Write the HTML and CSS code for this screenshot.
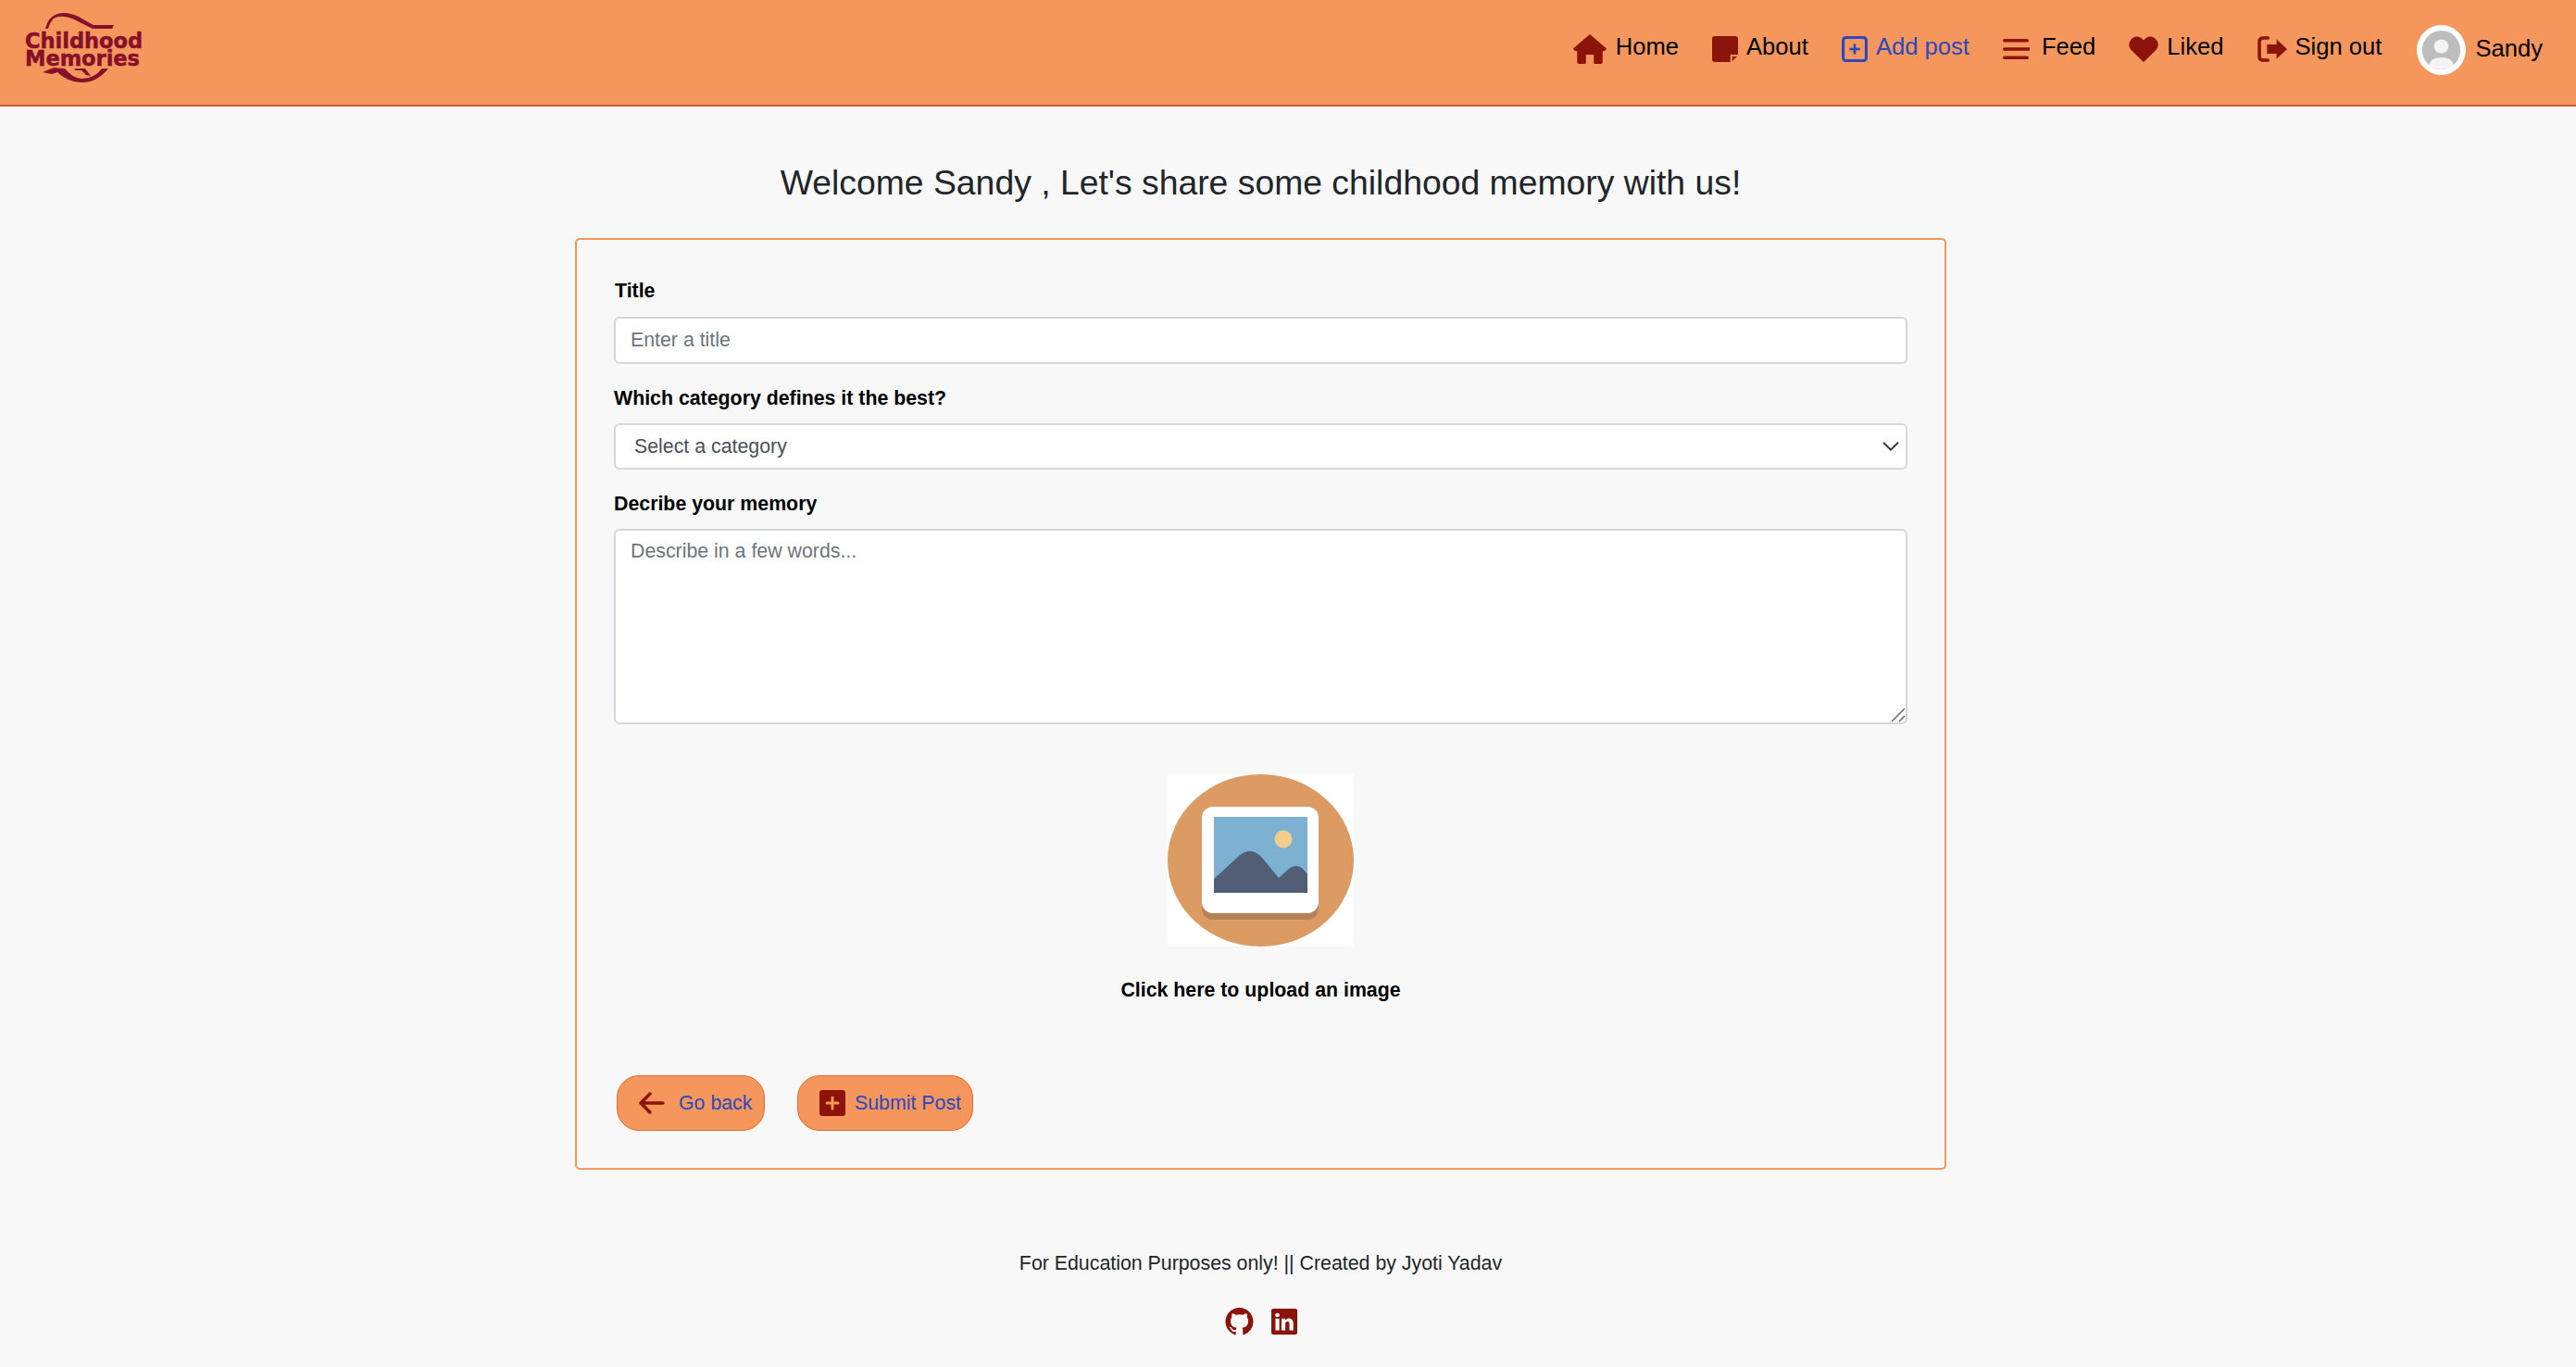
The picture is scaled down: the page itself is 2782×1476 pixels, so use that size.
FILE: index.html
```html
<!DOCTYPE html>
<html lang="en">
<head>
    <meta charset="UTF-8">
    <meta name="viewport" content="width=device-width, initial-scale=1.0">
    <title>Childhood Memories - Add post</title>
    <link rel="stylesheet" href="styles.css">
</head>
<body>
    <!-- Top navigation -->
    <header class="topbar">
        <a class="logo" href="#">
            <svg class="logo-arc" width="130" height="18" viewBox="27 14 130 18">
                <path d="M49 31Q52 18 62 15Q72 12 85 18Q95 24 101 27L123 27L121 31L100 31Q92 27 80 21Q66 15 58 20Q54 24 52 31Z"/>
            </svg>
            <span class="logo-text">Childhood</span>
            <span class="logo-text logo-text-second">Memories</span>
            <svg class="logo-arc" width="130" height="17" viewBox="27 77 130 17">
                <path d="M46 82L58 77L70 78Q78 88 88 89Q102 89 110 78L117 78Q104 94 87 93Q72 92 62 82L56 84Z"/>
                <path d="M80 78L92 78L98 86L93 85L88 80L82 80Z"/>
            </svg>
        </a>
        <nav class="nav">
            <a class="nav-link nav-link-home" href="#">
                <svg width="36" height="32" viewBox="0 0 34 32" preserveAspectRatio="none"><path d="M17 0L33.500 15Q34.500 17 32 18L30 18V30Q30 32 28 32H22Q21 32 21 31V22H13V31Q13 32 12 32H6Q4 32 4 30V18H2Q-.5 17 .5 15Z"/></svg>
                Home
            </a>
            <a class="nav-link" href="#">
                <svg width="28" height="28" viewBox="0 0 27 28" preserveAspectRatio="none"><path d="M3 0H24Q27 0 27 3V20H19V28H3Q0 28 0 25V3Q0 0 3 0Z"/><path d="M21 22H26L21 27Z"/></svg>
                About
            </a>
            <a class="nav-link nav-link-active" href="#">
                <svg width="28" height="28" viewBox="0 0 27 28" preserveAspectRatio="none"><rect x="1.500" y="1.500" width="24" height="25" rx="3" fill="none" stroke="currentColor" stroke-width="3"/><path d="M13.500 8.500V19.500M8 14H19" fill="none" stroke="currentColor" stroke-width="2.500"/></svg>
                Add post
            </a>
            <a class="nav-link nav-link-feed" href="#">
                <svg width="29" height="24" viewBox="0 0 29 26" preserveAspectRatio="none"><path d="M2 3H26M2 13H28M2 23H26" fill="none" stroke="currentColor" stroke-width="4" stroke-linecap="round"/></svg>
                Feed
            </a>
            <a class="nav-link" href="#">
                <svg width="32" height="28" viewBox="0 0 31 28" preserveAspectRatio="none"><path d="M15.500 28L2.500 15Q-1.500 10 1.500 5Q4.500 0 9 .5Q13 1 15.500 4.500Q18 1 22 .5Q26.500 0 29.500 5Q32.500 10 28.500 15Z"/></svg>
                Liked
            </a>
            <a class="nav-link" href="#">
                <svg width="32" height="28" viewBox="0 0 31 28" preserveAspectRatio="none"><path d="M11 2H6Q2 2 2 6V22Q2 26 6 26H11" fill="none" stroke="currentColor" stroke-width="3.500" stroke-linecap="round"/><path d="M10 9H20V3.500L31 14L20 24.500V19H10Z"/></svg>
                Sign out
            </a>
            <a class="nav-user" href="#">
                <svg width="53" height="54" viewBox="0 0 50 54" preserveAspectRatio="none">
                    <ellipse cx="25" cy="27" rx="25" ry="27" fill="#fff"/>
                    <ellipse cx="25" cy="27" rx="19.500" ry="21" fill="#bdbdbd"/>
                    <circle cx="25" cy="23" r="7.500" fill="#f3f3f3"/>
                    <path d="M12 44Q14 35 25 35Q36 35 38 44Q32 48 25 48Q18 48 12 44Z" fill="#f3f3f3"/>
                </svg>
                <span class="nav-user-name">Sandy</span>
            </a>
        </nav>
    </header>

    <main class="content">
        <h2 class="welcome">Welcome Sandy , Let's share some childhood memory with us!</h2>

        <!-- Post form -->
        <form class="post-form">
            <label class="field-label field-label-first" for="title">Title</label>
            <input class="field-input" type="text" id="title" placeholder="Enter a title">

            <label class="field-label" for="category">Which category defines it the best?</label>
            <select class="field-input field-select" id="category">
                <option>Select a category</option>
            </select>

            <label class="field-label" for="memory">Decribe your memory</label>
            <div class="area-wrap">
                <textarea class="field-input field-area" id="memory" placeholder="Describe in a few words..."></textarea>
                <svg class="area-handle" width="16" height="16" viewBox="0 0 16 16"><path d="M1 15L15 1M9 15L15 9" fill="none" stroke="#666" stroke-width="1.500"/></svg>
            </div>

            <label class="upload" for="image">
                <svg class="upload-picture" width="201" height="186" viewBox="0 0 201 186">
                    <rect width="201" height="186" fill="#fff"/>
                    <ellipse cx="100.500" cy="93" rx="100.500" ry="93" fill="#dc9b63"/>
                    <rect x="37" y="41" width="126" height="116" rx="12" fill="#b88258"/>
                    <rect x="37" y="35" width="126" height="115" rx="12" fill="#fff"/>
                    <rect x="50" y="46" width="101" height="82" fill="#7cb1d1"/>
                    <circle cx="125" cy="70" r="9.500" fill="#f2cd8c"/>
                    <path d="M50 128V113L75 90Q89 76 102 90L120 112L131 102Q139 96 146 102L151 108V128Z" fill="#525e75"/>
                </svg>
                <span class="upload-text">Click here to upload an image</span>
            </label>
            <input class="upload-input" type="file" id="image">

            <div class="form-actions">
                <button class="btn btn-back" type="button">
                    <svg width="28" height="24" viewBox="0 0 28 24"><path d="M12 2L2 12L12 22M3 12H26" fill="none" stroke="currentColor" stroke-width="3.500" stroke-linecap="round" stroke-linejoin="round"/></svg>
                    <span>Go back</span>
                </button>
                <button class="btn btn-submit" type="button">
                    <svg width="28" height="28" viewBox="0 0 28 28"><rect width="28" height="28" rx="3" fill="#8b1309"/><path d="M14 8V20M8 14H20" fill="none" stroke="#f5975c" stroke-width="3" stroke-linecap="round"/></svg>
                    <span>Submit Post</span>
                </button>
            </div>
        </form>
    </main>

    <footer class="footer">
        <p class="footer-text">For Education Purposes only! || Created by Jyoti Yadav</p>
        <div class="footer-icons">
            <a href="#"><svg width="31" height="30" viewBox="0 0 16 16"><path d="M8 0C3.580 0 0 3.580 0 8c0 3.540 2.290 6.530 5.470 7.590.4.070.55-.17.55-.38 0-.19-.01-.82-.01-1.490-2.010.37-2.530-.49-2.690-.94-.09-.23-.48-.94-.82-1.130-.28-.15-.68-.52-.01-.53.63-.01 1.080.58 1.230.82.72 1.210 1.870.87 2.330.66.07-.52.28-.87.51-1.070-1.780-.2-3.640-.89-3.640-3.950 0-.87.31-1.590.82-2.150-.08-.2-.36-1.020.08-2.120 0 0 .67-.21 2.200.82.64-.18 1.320-.27 2-.27.68 0 1.360.09 2 .27 1.530-1.040 2.200-.82 2.200-.82.44 1.100.16 1.920.08 2.120.51.56.82 1.270.82 2.150 0 3.070-1.870 3.750-3.650 3.950.29.25.54.73.54 1.480 0 1.070-.01 1.930-.01 2.200 0 .21.15.46.55.38A8.012 8.012 0 0 0 16 8c0-4.420-3.580-8-8-8z"/></svg></a>
            <a href="#"><svg width="28" height="28" viewBox="0 0 16 16"><path d="M0 1.146C0 .513.526 0 1.175 0h13.650C15.474 0 16 .513 16 1.146v13.708c0 .633-.526 1.146-1.175 1.146H1.175C.526 16 0 15.487 0 14.854V1.146zm4.943 12.248V6.169H2.542v7.225h2.401zm-1.200-8.212c.837 0 1.358-.554 1.358-1.248-.015-.709-.52-1.248-1.342-1.248-.822 0-1.359.54-1.359 1.248 0 .694.521 1.248 1.327 1.248h.016zm4.908 8.212V9.359c0-.216.016-.432.08-.586.173-.431.568-.878 1.232-.878.869 0 1.216.662 1.216 1.634v3.865h2.401V9.250c0-2.220-1.184-3.252-2.764-3.252-1.274 0-1.845.7-2.165 1.193v.025h-.016a5.540 5.540 0 0 1 .016-.025V6.169h-2.400c.03.678 0 7.225 0 7.225h2.400z"/></svg></a>
        </div>
    </footer>
</body>
</html>
```

FILE: styles.css
```css
/* General */
body {
    margin: 0;
    min-height: 1476px;
    background-color: #f8f8f8;
    color: #212529;
    font-family: "Liberation Sans", Arial, sans-serif;
}

a {
    color: inherit;
    text-decoration: none;
}

svg {
    display: block;
    flex-shrink: 0;
}

/* Top bar */
.topbar {
    display: flex;
    justify-content: space-between;
    height: 99px;
    padding: 14px 36px 0 27px;
    background-color: #f5975c;
    border-bottom: 2px solid #c9602c;
}

.logo {
    display: flex;
    flex-direction: column;
    width: 130px;
    color: #86102a;
}

.logo-arc {
    fill: #86102a;
}

.logo-text {
    margin-top: 3px;
    font-family: "DejaVu Sans", sans-serif;
    font-size: 22.5px;
    font-weight: 700;
    line-height: 19px;
    white-space: nowrap;
    -webkit-text-stroke: .5px #86102a;
}

.logo-text-second {
    margin-top: 0;
}

.nav {
    display: flex;
    align-items: flex-start;
    gap: 36px;
    padding-top: 14px;
    font-size: 25.6px;
    color: #000;
}

.nav-link {
    display: flex;
    align-items: center;
    gap: 9px;
    height: 44px;
}

.nav-link svg {
    margin-top: 6px;
    fill: #8b1309;
    color: #8b1309;
}

.nav-link-active {
    color: #2b48bf;
}

.nav-link-active svg {
    color: #2b48bf;
}

.nav-link-home {
    gap: 10px;
}

.nav-link-feed {
    gap: 13px;
}

.nav-user {
    display: flex;
    align-items: center;
    gap: 10px;
    height: 54px;
    margin: -1px 0 0 2px;
}

.nav-user-name {
    margin-bottom: 3px;
}

/* Page content */
.content {
    padding: 0 680px 0 621px;
}

.welcome {
    margin: 0;
    height: 82px;
    padding-top: 60px;
    font-size: 37.33px;
    font-weight: 400;
    line-height: 44px;
    text-align: center;
}

/* Form */
.post-form {
    display: flex;
    flex-direction: column;
    height: 1006px;
    padding: 0 40px;
    border: 2px solid #f5975c;
    border-radius: 5px;
    box-sizing: border-box;
}

.field-label {
    height: 24px;
    margin: 25px 0 15px;
    font-size: 21.33px;
    font-weight: 700;
    line-height: 24px;
    color: #000;
}

.field-label-first {
    margin: 43px 0 16px 1px;
}

.field-input {
    display: block;
    box-sizing: border-box;
    width: 100%;
    height: 51px;
    padding: 0 16px;
    background-color: #fff;
    border: 2px solid #d4d8dd;
    border-radius: 6px;
    font-family: inherit;
    font-size: 21.33px;
    color: #495057;
    outline: none;
}

.field-input::placeholder {
    color: #6c757d;
    opacity: 1;
}

.field-select {
    height: 50px;
    padding-left: 20px;
    appearance: none;
    background-image: url("data:image/svg+xml,%3csvg xmlns='http://www.w3.org/2000/svg' viewBox='0 0 16 16'%3e%3cpath fill='none' stroke='%23343a40' stroke-linecap='round' stroke-linejoin='round' stroke-width='1.500' d='M2 5l6 6 6-6'/%3e%3c/svg%3e");
    background-repeat: no-repeat;
    background-position: right 6px center;
    background-size: 20px 20px;
}

.area-wrap {
    position: relative;
}

.field-area {
    height: 211px;
    padding: 10px 16px;
    resize: none;
}

.area-handle {
    position: absolute;
    right: 2px;
    bottom: 2px;
}

.upload {
    display: flex;
    flex-direction: column;
    align-items: center;
    margin-top: 54px;
}

.upload-text {
    margin-top: 35px;
    font-size: 21.33px;
    font-weight: 700;
    line-height: 24px;
    color: #000;
}

.upload-input {
    display: none;
}

.form-actions {
    display: flex;
    gap: 35px;
    margin: 80px 0 0 3px;
}

.btn {
    display: flex;
    align-items: center;
    height: 60px;
    padding: 0;
    background-color: #f5975c;
    border: 1px solid #e56b2d;
    border-radius: 24px;
    font-family: inherit;
    font-size: 21.33px;
    color: #2b48bf;
}

.btn svg {
    color: #8b1309;
}

.btn-back {
    width: 160px;
    gap: 15px;
    padding-left: 23px;
}

.btn-submit {
    width: 190px;
    gap: 10px;
    padding-left: 23px;
}

/* Footer */
.footer {
    padding: 88px 680px 0 621px;
    text-align: center;
}

.footer-text {
    margin: 0;
    font-size: 21.33px;
    line-height: 26px;
}

.footer-icons {
    display: flex;
    justify-content: center;
    align-items: center;
    gap: 19px;
    margin-top: 35px;
    fill: #8b1309;
}
```
